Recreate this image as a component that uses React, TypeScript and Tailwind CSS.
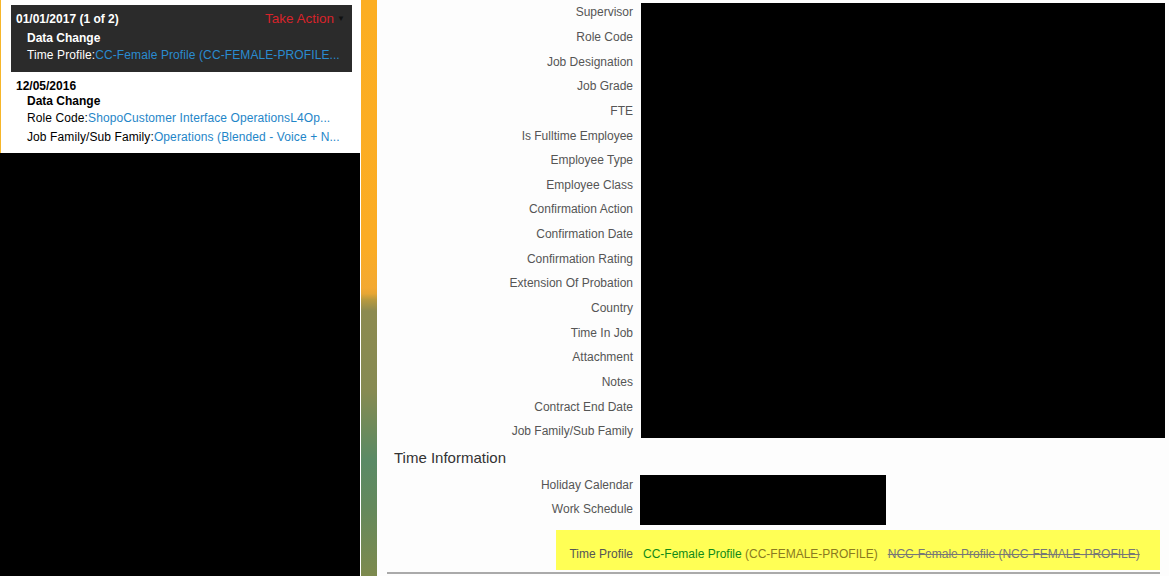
const jobRows = [
  "Supervisor",
  "Role Code",
  "Job Designation",
  "Job Grade",
  "FTE",
  "Is Fulltime Employee",
  "Employee Type",
  "Employee Class",
  "Confirmation Action",
  "Confirmation Date",
  "Confirmation Rating",
  "Extension Of Probation",
  "Country",
  "Time In Job",
  "Attachment",
  "Notes",
  "Contract End Date",
  "Job Family/Sub Family",
];

const timeRows = ["Holiday Calendar", "Work Schedule"];

const HistoryPanel = () => {
  return (
    <div className="w-[360px] shrink-0 flex flex-col bg-black">
      <div className="bg-white border-l border-[#f6b62a] pl-[10px] pr-[8px] pt-[5px] h-[153px]">
        {/* current pending change */}
        <div className="bg-[#2b2b2b] text-white px-[5px] pt-[4px] h-[67px]">
          <div className="flex justify-between items-center h-[20px]">
            <span className="font-bold">01/01/2017 (1 of 2)</span>
            <span className="flex items-center text-[#d8232a] text-[13.5px] pr-[2px]">
              Take Action
              <span className="ml-[3px] text-[#111] text-[8px]">▼</span>
            </span>
          </div>
          <div className="pl-[11px] font-bold leading-[18px]">Data Change</div>
          <div className="pl-[11px] leading-[17px] whitespace-nowrap tracking-[0.1px]">
            Time Profile:<span className="text-[#2a8bd0]">CC-Female Profile (CC-FEMALE-PROFILE...</span>
          </div>
        </div>

        <div className="pl-[5px] pt-[6px] text-black">
          <div className="font-bold leading-[16px]">12/05/2016</div>
          <div className="pl-[11px] font-bold leading-[15px]">Data Change</div>
          <div className="pl-[11px] leading-[19px] whitespace-nowrap tracking-[0.1px]">
            Role Code:<span className="text-[#1f86c8]">ShopoCustomer Interface OperationsL4Op...</span>
          </div>
          <div className="pl-[11px] leading-[19px] whitespace-nowrap tracking-[0.1px]">
            Job Family/Sub Family:<span className="text-[#1f86c8]">Operations (Blended - Voice + N...</span>
          </div>
        </div>
      </div>
    </div>
  );
};

const LabelRow = ({ label }: { label: string }) => (
  <div className="h-[24.65px] flex items-center justify-end text-[#555]">{label}</div>
);

const App = () => {
  return (
    <div
      className="w-[1169px] h-[576px] overflow-hidden flex bg-white text-[12px]"
      style={{ fontFamily: '"Liberation Sans", Arial, sans-serif' }}
    >
      <HistoryPanel />

      {/* background strip */}
      <div className="w-[16px] ml-[1px] shrink-0 bg-[linear-gradient(180deg,#fcae22_0%,#fbac24_43%,#f3a932_50%,#e6a634_51%,#b99a3e_52%,#8c8a50_54%,#868a52_68%,#6f8a5a_74%,#5a8a66_80%,#64895c_88%,#7d8a4e_100%)]" />

      {/* employee details */}
      <div className="flex-1 bg-[#fdfdfd] flex flex-col pr-[4px]">
        <div className="flex gap-[8px]">
          <div className="w-[256px] shrink-0">
            {jobRows.map((r) => (
              <LabelRow key={r} label={r} />
            ))}
          </div>
          <div className="flex-1 bg-black mt-[3px] h-[435px]" />
        </div>

        <div className="h-[28px] flex items-center pl-[17px] pt-[1px] text-[15px] text-[#333]">
          Time Information
        </div>

        <div className="flex gap-[7px] h-[53px]">
          <div className="w-[256px] shrink-0 pt-[1px]">
            {timeRows.map((r) => (
              <LabelRow key={r} label={r} />
            ))}
          </div>
          <div className="w-[246px] bg-black mt-[3px] h-[50px]" />
        </div>

        <div className="ml-[179px] mr-[5px] mt-[5px] h-[40px] bg-[#ffff55] flex items-start pt-[16px] leading-[16px]">
          <div className="w-[77px] text-right text-[#555] shrink-0">Time Profile</div>
          <div className="pl-[10px] whitespace-nowrap">
            <span className="text-[#108a18]">CC-Female Profile</span>
            <span className="text-[#8a7a20]"> (CC-FEMALE-PROFILE)</span>
            <span className="ml-[10px] text-[#777] line-through">NCC-Female Profile (NCC-FEMALE-PROFILE)</span>
          </div>
        </div>

        <div className="ml-[10px] mr-[5px] mt-[2px] h-[2px] bg-[#aaa]" />
      </div>
    </div>
  );
};

export default App;
